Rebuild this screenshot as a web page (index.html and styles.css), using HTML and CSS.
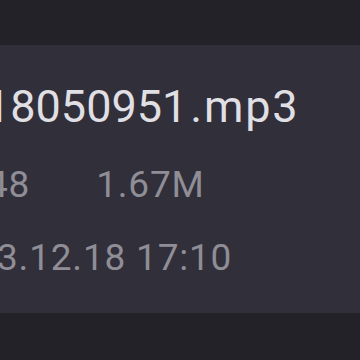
FILE: index.html
```html
<!DOCTYPE html>
<html>
<head>
<meta charset="utf-8">
<link rel="stylesheet" href="styles.css">
</head>
<body>
<div class="screen">
  <div class="card">
    <div class="name">18050951<span class="ext">.mp3</span></div>
    <div class="meta">
      <span class="duration">48</span>
      <span class="size">1.67M</span>
    </div>
    <div class="date">3.12.18 17:10</div>
  </div>
</div>
</body>
</html>
```
FILE: styles.css
```css
html, body {
  margin: 0;
  padding: 0;
  background: #232228;
}
.screen {
  width: 360px;
  height: 360px;
  overflow: hidden;
  padding-top: 45px;
  box-sizing: border-box;
  font-family: Roboto, "Noto Sans", sans-serif;
}
.card {
  height: 268px;
  background: #312f3a;
  box-sizing: border-box;
  padding-top: 36px;
  display: flex;
  flex-direction: column;
  overflow: hidden;
}
.name {
  font-size: 45px;
  line-height: 52px;
  color: #e0dfe4;
  white-space: nowrap;
  margin-left: -15px;
}
.ext {
  margin-left: 3px;
  letter-spacing: 1.8px;
}
.meta {
  margin-top: 30px;
  font-size: 37px;
  line-height: 44px;
  letter-spacing: 0.8px;
  color: #8f8d96;
  display: flex;
  white-space: nowrap;
  margin-left: -13px;
}
.size {
  margin-left: 66px;
}
.date {
  margin-top: 29px;
  font-size: 37px;
  line-height: 44px;
  letter-spacing: 0.8px;
  color: #8f8d96;
  white-space: nowrap;
  margin-left: -3px;
}
```
